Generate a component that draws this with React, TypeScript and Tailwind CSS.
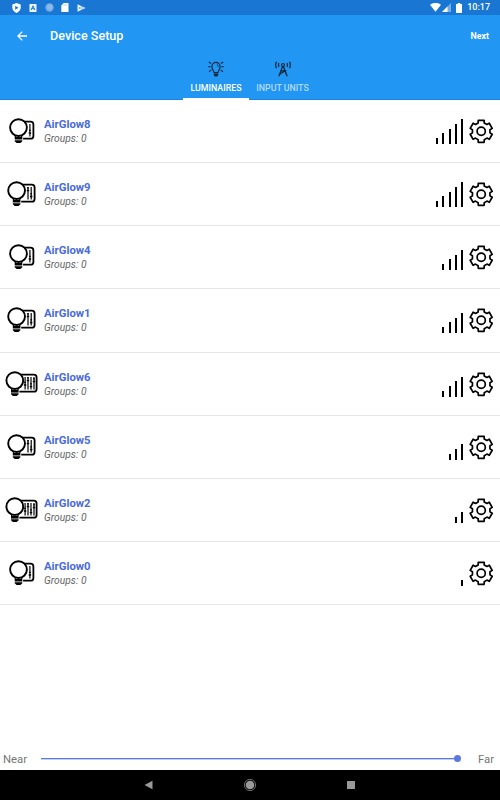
import React from 'react';

type Device = { name: string; sliders: 1 | 2 | 4; signal: number };

const devices: Device[] = [
  { name: 'AirGlow8', sliders: 1, signal: 5 },
  { name: 'AirGlow9', sliders: 2, signal: 5 },
  { name: 'AirGlow4', sliders: 1, signal: 4 },
  { name: 'AirGlow1', sliders: 2, signal: 4 },
  { name: 'AirGlow6', sliders: 4, signal: 4 },
  { name: 'AirGlow5', sliders: 2, signal: 3 },
  { name: 'AirGlow2', sliders: 4, signal: 2 },
  { name: 'AirGlow0', sliders: 1, signal: 1 },
];

// Bulb centre, right edge of the panel, and [x, knob y] of every slider.
const layouts = {
  1: { cx: 18.5, right: 33.4, tracks: [[29.9, 15]] },
  2: { cx: 16.6, right: 34.6, tracks: [[28, 9.5], [31.2, 15.5]] },
  4: { cx: 14.8, right: 36.6, tracks: [[25.1, 14], [28, 9.5], [31, 15.5], [34, 10.5]] },
};

function LampIcon({ sliders }: { sliders: 1 | 2 | 4 }) {
  const { cx, right, tracks } = layouts[sliders];
  return (
    <svg className="h-[26px] w-[44px] shrink-0" viewBox="0 0 44 26" fill="none" stroke="#000">
      <rect x={cx} y="3.6" width={right - cx} height="17.1" rx="2.8" strokeWidth="1.8" fill="#fff" />
      {tracks.map(([x, y]) => (
        <g key={x}>
          <path d={`M${x} 6v12.500`} strokeWidth="1.200" />
          <path d={`M${x - 1.2} ${y}h2.4M${x - 0.9} ${y - 2.6}h1.8`} strokeWidth="1.3" />
        </g>
      ))}
      <path d={`M${cx - 4.6} 15h9.2v10h-9.2z`} fill="#fff" stroke="none" />
      <circle cx={cx} cy="9.6" r="8.400" fill="#fff" strokeWidth="1.900" />
      <path d={`M${cx - 3.8} 18.8h7.6v2.800h-7.6z`} fill="#000" stroke="none" />
      <path d={`M${cx - 3.800} 22.200h7.600v1l-1.9 1.9h-3.8l-1.9-1.9z`} fill="#000" stroke="none" />
      <path d={`M${cx - 3.2} 17.5v1.500M${cx + 3.2} 17.5v1.500`} strokeWidth="1.200" />
    </svg>
  );
}

const barHeights = ['h-[6px]', 'h-[11px]', 'h-[15.5px]', 'h-[20px]', 'h-[25px]'];

function Signal({ level }: { level: number }) {
  return (
    <div className="flex h-[25px] items-end gap-[4.25px]">
      {barHeights.slice(0, level).map((h) => (
        <span key={h} className={`w-[2px] bg-black ${h}`} />
      ))}
    </div>
  );
}

function gearTooth(i: number) {
  const pts: [number, number][] = [
    [-20, 8.9],
    [-15, 11.4],
    [15, 11.4],
    [20, 8.9],
  ];
  return pts
    .map(([a, r]) => {
      const t = ((a + i * 60 - 90) * Math.PI) / 180;
      return `${(12.2 + r * Math.cos(t)).toFixed(2)} ${(12.3 + r * Math.sin(t)).toFixed(2)}`;
    })
    .join('L');
}
const gearPath = 'M' + [0, 1, 2, 3, 4, 5].map(gearTooth).join('L') + 'Z';

function Gear() {
  return (
    <svg className="h-[25px] w-[25px]" viewBox="0 0 25 25" fill="none" stroke="#000" strokeWidth="1.700" strokeLinejoin="round">
      <path d={gearPath} />
      <circle cx="12.2" cy="12.3" r="4.1" />
    </svg>
  );
}

function StatusBar() {
  return (
    <div className="flex h-[15px] items-center justify-between bg-[#1976d2] pr-[10px] pl-[12px] text-white">
      <div className="flex items-center gap-[7px]">
        <svg className="h-[10px] w-[9px]" viewBox="0 0 9 10">
          <path d="M4.5 0 8.7 1.6v3c0 2.5-1.8 4.5-4.2 5.4C2.100 9.100.3 7.100.3 4.600v-3z" fill="#fff" />
          <path d="M3.200 2.800v4L6.500 4.800z" fill="#1976d2" />
        </svg>
        <svg className="ml-[1px] h-[8px] w-[8px]" viewBox="0 0 8 8">
          <rect x=".5" width="7" height="8" rx=".6" fill="#eef6fd" />
          <path d="M2.200 6 4 1.800 5.800 6M2.900 4.700h2.200" stroke="#1976d2" fill="none" />
        </svg>
        <svg className="ml-[1px] h-[9px] w-[9px]" viewBox="0 0 9 9">
          <circle cx="4.500" cy="4.500" r="4.200" fill="#73abe4" />
          <circle cx="4.900" cy="4.100" r="2.800" fill="#8bbaea" />
        </svg>
        <svg className="h-[9px] w-[8px]" viewBox="0 0 8 9">
          <path d="M2.600 0H7.500v9H.3V2.500z" fill="#fff" />
          <path d="M3 1.200v1.500M4.500 1.200v1.500M6 1.200v1.500" stroke="#8bbaea" strokeWidth=".6" />
        </svg>
        <svg className="ml-[1px] h-[8px] w-[9px]" viewBox="0 0 9 8">
          <path d="M.5.2 8.500 4 .5 7.800z" fill="#e6f1fb" />
          <path d="M2.200 3 4.400 4 2.200 5z" fill="#4c91da" />
          <path d="M4 2.200 6 4 4 5.800" fill="none" stroke="#4c91da" strokeWidth=".5" />
        </svg>
      </div>
      <div className="flex items-center">
        <svg className="h-[9px] w-[11px]" viewBox="0 0 11 9">
          <path d="M0 1.700Q5.500-1.900 11 1.700L5.500 8.800z" fill="#fff" />
        </svg>
        <svg className="ml-[1px] h-[9px] w-[9px]" viewBox="0 0 9 9">
          <path d="M0 9 9 0v9z" fill="#75ade4" />
          <path d="M0 9 5.500 3.500V9z" fill="#fff" />
        </svg>
        <svg className="ml-[5px] h-[10px] w-[6px]" viewBox="0 0 6 10">
          <path d="M1.700 0h2.600v1H6v9H0V1h1.700z" fill="#fff" />
        </svg>
        <span className="ml-[5px] text-[9px] leading-[15px] font-medium">10:17</span>
      </div>
    </div>
  );
}

function BulbTabIcon() {
  return (
    <svg className="h-[16px] w-[16px]" viewBox="0 0 16 16" fill="none" stroke="#0a2438" strokeWidth="1.100" strokeLinecap="round">
      <path d="M6 11.500C5.900 9.700 3.900 8.800 3.900 5.500a4.100 4.100 0 0 1 8.200 0c0 3.300-2 4.200-2.100 6z" />
      <path d="M6.300 13.200h3.400M6.900 14.800h2.200" strokeWidth="1.500" />
      <path d="M2.700 2.200 1.200 1.200M13.300 2.200l1.500-1M2.200 5.800H.6M13.800 5.800h1.600M2.900 9.300l-1.500 1.100M13.100 9.300l1.500 1.100" />
      <path d="M9 3.300q1.200.7 1.200 2.200" strokeWidth=".8" />
    </svg>
  );
}

function AntennaTabIcon() {
  return (
    <svg className="h-[16px] w-[16px]" viewBox="0 0 16 16" fill="none" stroke="#0a2438" strokeWidth="1.200">
      <path d="M7.600 5.500 3.800 15.200M8.400 5.500 12.200 15.200M6.100 9.900h3.800L4.800 13.200M9.900 9.900l1.300 3.300" />
      <circle cx="8" cy="4" r="1.500" />
      <path d="M1.500.7Q-.2 4 1.500 7.300M4 2.100Q3 4 4 5.900M14.500.7q1.700 3.300 0 6.600M12 2.100q1 1.900 0 3.800" />
    </svg>
  );
}

export default function App() {
  return (
    <div className="flex h-[800px] w-[500px] flex-col overflow-hidden bg-white font-['Roboto',sans-serif]">
      <StatusBar />
      <header className="flex h-[85px] flex-col border-b border-[#1b83dc] bg-[#2196f3] text-white">
        <div className="flex h-[41px] items-center pr-[11px] pl-[17px]">
          <svg className="h-[10px] w-[10px]" viewBox="0 0 10 10" fill="none" stroke="#fff" strokeWidth="1.300">
            <path d="M10 5H1M5.300.6.900 5l4.400 4.400" />
          </svg>
          <h1 className="ml-[23px] text-[12.600px] leading-4 font-medium">Device Setup</h1>
          <button className="ml-auto text-[8.800px] leading-4 font-bold">Next</button>
        </div>
        <nav className="-mb-px flex h-[44px] justify-center text-[8.800px] leading-[10px] font-medium">
          <div className="flex w-[66px] flex-col items-center border-b-2 border-white pt-[5px]">
            <BulbTabIcon />
            <span className="mt-[6px]">LUMINAIRES</span>
          </div>
          <div className="flex w-[68px] flex-col items-center pt-[5px] pr-[1px] text-[#b2dafb]">
            <AntennaTabIcon />
            <span className="mt-[6px] whitespace-nowrap">INPUT UNITS</span>
          </div>
        </nav>
      </header>

      <main className="flex-1">
        {devices.map((d) => (
          <div key={d.name} className="flex h-[63.125px] border-b border-[#e6e6e6] pt-[18px] pr-[6px]">
            <LampIcon sliders={d.sliders} />
            <div className="-mt-px">
              <div className="text-[11.300px] leading-[15px] font-bold text-[#4a6bd8]">{d.name}</div>
              <div className="text-[10.250px] leading-[14px] text-[#666] italic">Groups: 0</div>
            </div>
            <div className="ml-auto flex gap-[6px] pt-[1px]">
              <Signal level={d.signal} />
              <Gear />
            </div>
          </div>
        ))}
      </main>

      <div className="flex h-[22px] items-center pr-[6px] pl-[3px] text-[11.300px] text-[#757575]">
        <span className="mt-[2px] w-[38px]">Near</span>
        <div className="mb-[1px] flex flex-1 items-center">
          <div className="h-[2px] flex-1 border-b border-[#c5d0f5] bg-[#5b78e0]" />
          <div className="h-[7.500px] w-[7.500px] rounded-full bg-[#5b78e0]" />
        </div>
        <span className="mt-[2px] ml-[16.500px]">Far</span>
      </div>

      <footer className="flex h-[30px] items-center justify-center bg-black">
        <svg className="h-[14px] w-[212px]" viewBox="0 0 212 14" fill="#999">
          <path d="M.5 7 8.500 2.800v8.400z" />
          <circle cx="106" cy="7" r="4.300" />
          <circle cx="106" cy="7" r="5.600" fill="none" stroke="#888" strokeWidth=".8" />
          <path d="M203 3h8v8h-8z" />
        </svg>
      </footer>
    </div>
  );
}
